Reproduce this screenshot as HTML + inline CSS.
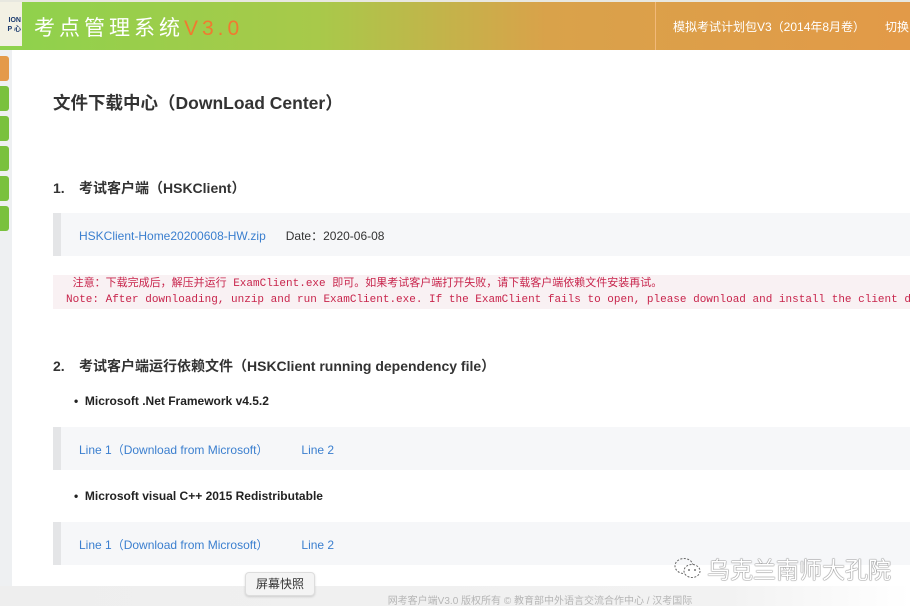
<!DOCTYPE html>
<html><head><meta charset="utf-8"><style>
*{margin:0;padding:0;box-sizing:border-box}
body{width:910px;height:606px;overflow:hidden;background:#fff;font-family:"Liberation Sans","Noto Sans CJK SC",sans-serif;position:relative;color:#333}
.hdr{position:absolute;left:0;top:0;width:910px;height:50px;background:linear-gradient(90deg,#8ed24c 0%,#a8c94a 35%,#d9a24a 60%,#e29a48 100%);border-top:2px solid #e8e8e0}
.logo{position:absolute;left:0;top:2px;width:22px;height:44px;background:#f3f1e4;font-size:7px;font-weight:bold;color:#1b3a6e;line-height:9px;padding-top:14px;text-align:right;padding-right:1px}
.title{position:absolute;left:34px;top:12px;font-size:21px;color:#fff;letter-spacing:4px}
.title span{color:#f07a30;letter-spacing:4px}
.sep{position:absolute;left:655px;top:2px;width:1px;height:48px;background:#f2b979}
.r1{position:absolute;left:673px;top:18px;font-size:12px;color:#fff}
.r2{position:absolute;left:885px;top:18px;font-size:12px;color:#fff}
.side{position:absolute;left:0;top:50px;width:12px;height:556px;background:#eef0f2}
.tab{position:absolute;left:0;width:9px;height:25px;border-radius:0 3px 3px 0;background:#7ac13e}
h1{position:absolute;left:53px;top:90px;font-size:17.5px;font-weight:bold;color:#333}
h2{position:absolute;left:53px;font-size:14px;font-weight:bold;color:#333}
h2 b{display:inline-block;width:26px}
.box{position:absolute;left:53px;width:857px;height:43px;background:#f6f7f9;border-left:8px solid #e4e5e7;font-size:12px;padding:14px 0 0 18px;color:#333}
a{color:#3b7fcf;text-decoration:none}
.note{position:absolute;left:53px;top:275px;width:857px;height:34px;background:#f9f1f3;font-family:"Liberation Mono","Noto Sans CJK SC",monospace;font-size:11px;color:#c8254c;line-height:16px;padding:1px 0 0 13px;white-space:nowrap;overflow:hidden}
.li{position:absolute;left:74px;font-size:12px;font-weight:bold;color:#222}
.foot{position:absolute;left:0;top:586px;width:910px;height:20px;background:linear-gradient(90deg,#eee,#f2f2f2 80%,#fff);font-size:10px;color:#b5b5b5;text-align:center;padding:6px 0 0 170px}
.tip{position:absolute;left:245px;top:572px;width:70px;height:24px;background:#f4f4f4;border:1px solid #ddd;border-radius:4px;font-size:12px;text-align:center;line-height:22px;color:#333;box-shadow:0 1px 2px rgba(0,0,0,.15)}
.wm{position:absolute;left:673px;top:551px;font-size:23px;color:#fff;text-shadow:0 0 1px #555,0 0 1px #555;white-space:nowrap}
</style></head><body>
<div class="hdr"></div>
<div class="logo">ION<br>P 心</div>
<div class="title">考点管理系统<span>V3.0</span></div>
<div class="sep"></div>
<div class="r1">模拟考试计划包V3（2014年8月卷）</div>
<div class="r2">切换</div>
<div class="side"></div>
<div class="tab" style="top:56px;background:#e49a4a"></div>
<div class="tab" style="top:86px"></div>
<div class="tab" style="top:116px"></div>
<div class="tab" style="top:146px"></div>
<div class="tab" style="top:176px"></div>
<div class="tab" style="top:206px"></div>
<h1>文件下载中心（DownLoad Center）</h1>
<h2 style="top:178px"><b>1.</b>考试客户端（HSKClient）</h2>
<div class="box" style="top:213px"><a>HSKClient-Home20200608-HW.zip</a>&nbsp;&nbsp;&nbsp;&nbsp;&nbsp;&nbsp;Date：2020-06-08</div>
<div class="note">&nbsp;注意：下载完成后，解压并运行 ExamClient.exe 即可。如果考试客户端打开失败，请下载客户端依赖文件安装再试。<br>Note: After downloading, unzip and run ExamClient.exe. If the ExamClient fails to open, please download and install the client dependency file.</div>
<h2 style="top:356px"><b>2.</b>考试客户端运行依赖文件（HSKClient running dependency file）</h2>
<div class="li" style="top:394px">•&nbsp; Microsoft .Net Framework v4.5.2</div>
<div class="box" style="top:427px"><a>Line 1（Download from Microsoft）</a><a style="margin-left:33px">Line 2</a></div>
<div class="li" style="top:489px">•&nbsp; Microsoft visual C++ 2015 Redistributable</div>
<div class="box" style="top:522px"><a>Line 1（Download from Microsoft）</a><a style="margin-left:33px">Line 2</a></div>
<div class="foot">网考客户端V3.0 版权所有 © 教育部中外语言交流合作中心 / 汉考国际</div>
<div class="tip">屏幕快照</div>
<div class="wm"><svg width="30" height="26" viewBox="0 0 30 26" style="vertical-align:-4px;margin-right:4px"><g fill="none" stroke="#666" stroke-width="1" stroke-dasharray="2 1.5"><ellipse cx="11" cy="10" rx="9" ry="7.5"/><ellipse cx="19" cy="15" rx="8" ry="6.5" fill="#fff"/></g><circle cx="16" cy="14" r="1" fill="#777"/><circle cx="22" cy="14" r="1" fill="#777"/></svg>乌克兰南师大孔院</div>
</body></html>
